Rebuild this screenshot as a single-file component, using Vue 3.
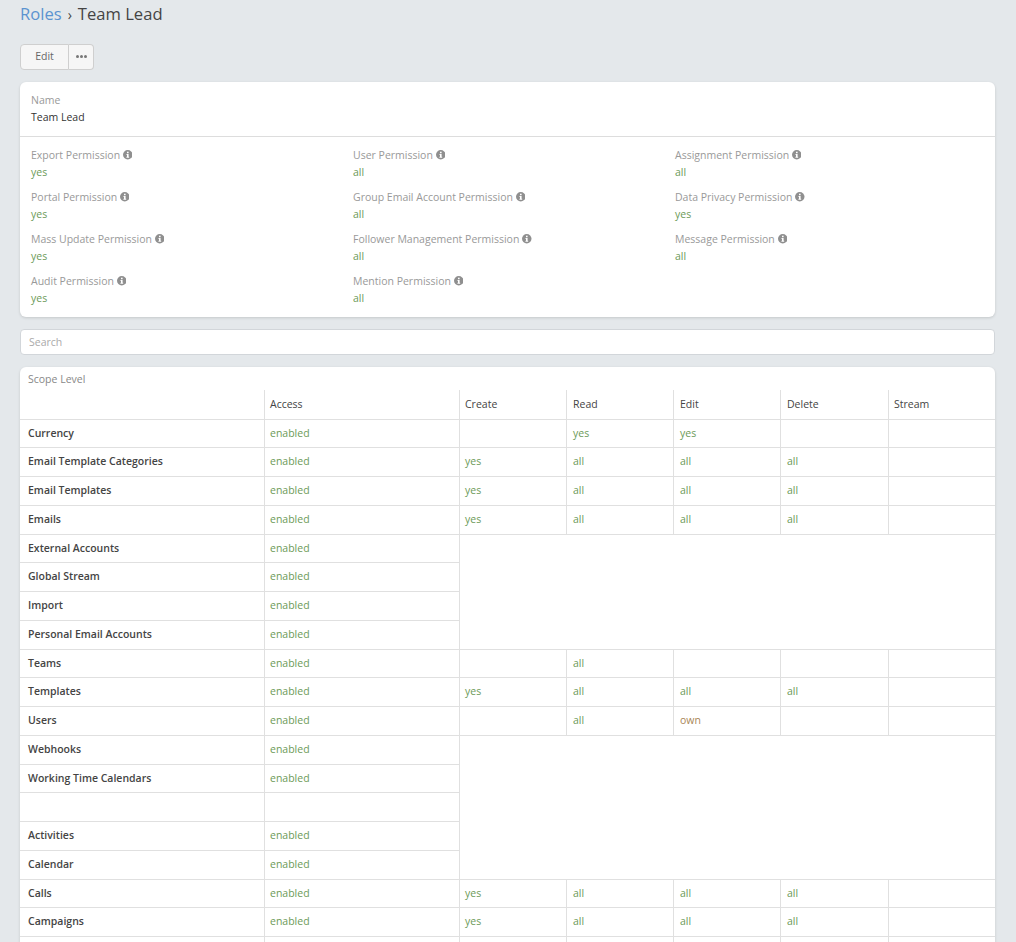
<script setup>
const fieldCols = [
  [['Export Permission', 'yes'], ['Portal Permission', 'yes'], ['Mass Update Permission', 'yes'], ['Audit Permission', 'yes']],
  [['User Permission', 'all'], ['Group Email Account Permission', 'all'], ['Follower Management Permission', 'all'], ['Mention Permission', 'all']],
  [['Assignment Permission', 'all'], ['Data Privacy Permission', 'yes'], ['Message Permission', 'all']],
]
const heads = ['', 'Access', 'Create', 'Read', 'Edit', 'Delete', 'Stream']
const full = ['yes', 'all', 'all', 'all', '']
const rows = [
  { name: 'Currency', access: 'enabled', cells: ['', 'yes', 'yes', '', ''] },
  { name: 'Email Template Categories', access: 'enabled', cells: full },
  { name: 'Email Templates', access: 'enabled', cells: full },
  { name: 'Emails', access: 'enabled', cells: full },
  { name: 'External Accounts', access: 'enabled' },
  { name: 'Global Stream', access: 'enabled' },
  { name: 'Import', access: 'enabled' },
  { name: 'Personal Email Accounts', access: 'enabled' },
  { name: 'Teams', access: 'enabled', cells: ['', 'all', '', '', ''] },
  { name: 'Templates', access: 'enabled', cells: full },
  { name: 'Users', access: 'enabled', cells: ['', 'all', 'own', '', ''] },
  { name: 'Webhooks', access: 'enabled' },
  { name: 'Working Time Calendars', access: 'enabled' },
  { name: '', access: '' },
  { name: 'Activities', access: 'enabled' },
  { name: 'Calendar', access: 'enabled' },
  { name: 'Calls', access: 'enabled', cells: full },
  { name: 'Campaigns', access: 'enabled', cells: full },
  { name: '', access: '', cells: ['', '', '', '', ''] },
]
</script>

<template>
  <div class="page">
    <h3 class="title"><a class="crumb">Roles</a><span class="sep">›</span><span>Team Lead</span></h3>

    <div class="btn-group">
      <button class="btn btn-edit">Edit</button>
      <button class="btn btn-more" aria-label="More"><i></i><i></i><i></i></button>
    </div>

    <section class="card">
      <div class="name-block">
        <div class="label">Name</div>
        <div class="value">Team Lead</div>
      </div>
      <div class="fields">
        <div v-for="(col, c) in fieldCols" :key="c" class="field-col">
          <div v-for="f in col" :key="f[0]" class="field">
            <div class="label">
              {{ f[0] }}
              <svg class="info" viewBox="0 0 10 10" aria-hidden="true">
                <circle cx="5" cy="5" r="5" fill="#8f8f8f" />
                <rect x="4.2" y="1.8" width="1.7" height="1.6" fill="#fff" />
                <path d="M3.7 4.3H5.9V7.2H6.5V8.2H3.6V7.2H4.2V5.3H3.7Z" fill="#fff" />
              </svg>
            </div>
            <div class="ok">{{ f[1] }}</div>
          </div>
        </div>
      </div>
    </section>

    <input class="search" type="text" placeholder="Search" />

    <section class="card table-card">
      <div class="scope">Scope Level</div>
      <div class="trow thead">
        <div v-for="(h, i) in heads" :key="i" class="cell" :class="{ first: i === 0 }">{{ h }}</div>
      </div>
      <div v-for="(r, i) in rows" :key="i" class="trow tbody">
        <div class="cell first name">{{ r.name }}</div>
        <div class="cell ok">{{ r.access }}</div>
        <template v-if="r.cells">
          <div v-for="(v, j) in r.cells" :key="j" class="cell" :class="v === 'own' ? 'warn' : 'ok'">{{ v }}</div>
        </template>
        <div v-else class="blank" :class="{ closing: rows[i + 1] && rows[i + 1].cells }"></div>
      </div>
    </section>
  </div>
</template>

<style>
html, body { margin: 0; background: #e4e8eb; overflow: hidden; }
</style>

<style scoped>
.page {
  height: 942px;
  overflow: hidden;
  box-sizing: border-box;
  padding: 0 21px 0 20px;
  background: #e4e8eb;
  color: #333;
  font-family: "Open Sans", sans-serif;
  font-size: 10.5px;
  line-height: 17px;
}
.title {
  margin: 0;
  height: 44px;
  padding-top: 2px;
  box-sizing: border-box;
  font-size: 16.6px;
  line-height: 24px;
  font-weight: 400;
  color: #444;
}
.crumb { color: #5b93d0; }
.sep { margin: 0 6px; font-size: 14px; }
.btn-group { display: flex; height: 26px; width: 74px; }
.btn {
  margin: 0;
  padding: 0 0 2px;
  background: #f6f6f6;
  border: 1px solid #cfcfcf;
  color: #666;
  font-family: inherit;
  font-size: 10.5px;
  line-height: 17px;
}
.btn-edit { width: 49px; border-radius: 4px 0 0 4px; }
.btn-more {
  width: 25px;
  border-left: 0;
  border-radius: 0 4px 4px 0;
  display: flex;
  align-items: center;
  justify-content: center;
  gap: 1px;
}
.btn-more i { width: 3px; height: 3px; border-radius: 50%; background: #777; }
.card {
  background: #fff;
  border-radius: 6px;
  box-shadow: 0 1px 3px rgba(0, 0, 0, 0.14);
}
.btn-group + .card { margin-top: 12px; height: 235px; box-sizing: border-box; }
.name-block {
  height: 55px;
  box-sizing: border-box;
  padding: 10px 11px 0;
  border-bottom: 1px solid #ddd;
}
.label { color: #999; }
.value { color: #333; }
.fields {
  display: grid;
  grid-template-columns: repeat(3, 322px);
  padding: 10px 11px 0;
}
.field { height: 42px; }
.info { width: 9.5px; height: 9.5px; vertical-align: -0.5px; }
.ok { color: #6c9a58; }
.warn { color: #a98657; }
.search {
  display: block;
  width: 100%;
  box-sizing: border-box;
  height: 26px;
  margin: 12px 0;
  padding: 0 8px;
  background: #fff;
  border: 1px solid #d2d6da;
  border-radius: 4px;
  outline: 0;
  font-family: inherit;
  font-size: 10.5px;
  color: #333;
}
.search::placeholder { color: #aaa; opacity: 1; }
.scope { height: 23px; padding: 4px 8px 0; box-sizing: border-box; color: #888; }
.trow {
  display: grid;
  grid-template-columns: 244px 195px 107px 107px 107px 108px 107px;
  box-sizing: border-box;
  border-bottom: 1px solid #e0e0e0;
}
.thead { height: 29.5px; }
.thead .cell { line-height: 28.5px; }
.tbody { height: 28.75px; }
.cell {
  box-sizing: border-box;
  padding-left: 5px;
  border-left: 1px solid #e0e0e0;
  line-height: 27.5px;
  white-space: nowrap;
  color: #444;
}
.cell.ok { color: #6c9a58; }
.cell.warn { color: #a98657; }
.cell.first { border-left: 0; padding-left: 8px; }
.cell:nth-child(4),
.cell:nth-child(5),
.cell:nth-child(6) { padding-left: 6px; }
.name { font-weight: 600; }
.blank {
  grid-column: 3 / 8;
  background: #fff;
  border-left: 1px solid #e0e0e0;
  margin-bottom: -1px;
  position: relative;
}
.blank.closing { margin-bottom: 0; }
</style>
